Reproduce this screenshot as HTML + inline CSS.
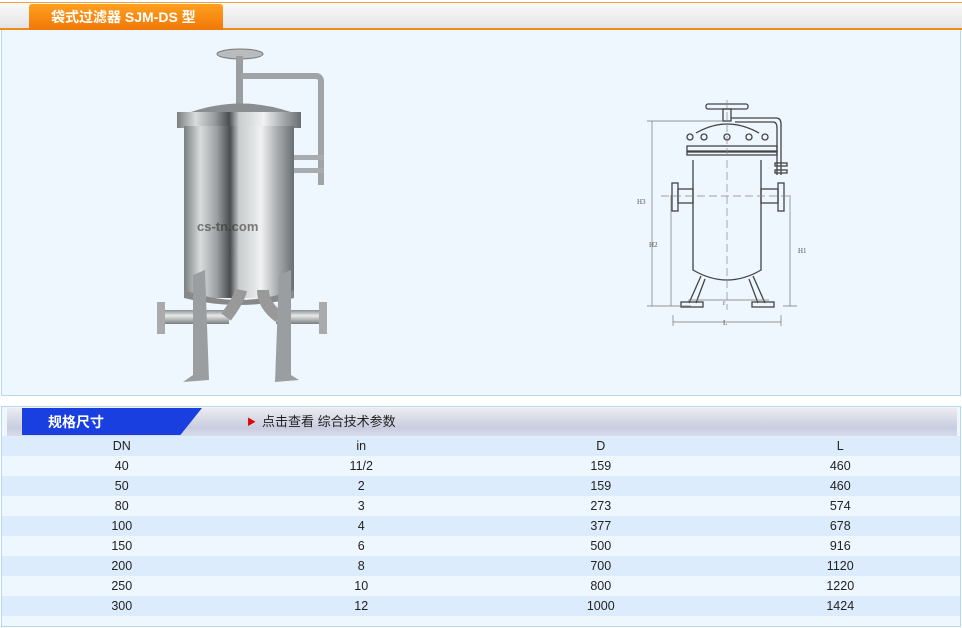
<!DOCTYPE html>
<html><head><meta charset="utf-8"><style>
*{margin:0;padding:0;box-sizing:border-box}
body{width:962px;height:628px;background:#fff;font-family:"Liberation Sans","Noto Sans CJK SC",sans-serif;position:relative;overflow:hidden}
.top{position:absolute;left:0;top:2px;width:962px;height:28px;background:linear-gradient(#fafafa,#e4e4e4);border-top:1px solid #f5a040;border-bottom:2px solid #f08a10}
.tab{position:absolute;left:29px;top:4px;width:194px;height:26px;background:linear-gradient(#ffa020,#f07808);border-radius:3px 3px 0 0;color:#fff;font-weight:bold;font-size:14px;line-height:26px;padding-left:22px}
.box1{position:absolute;left:1px;top:30px;width:960px;height:366px;background:#eef6fe;border:1px solid #b8d6f0;border-top:none}
.box2{position:absolute;left:1px;top:406px;width:960px;height:221px;background:#eef6fe;border:1px solid #b8d6f0;overflow:hidden}
.hdr{position:absolute;left:5px;top:1px;width:950px;height:28px;background:linear-gradient(#ececf0,#c8cde0 70%,#d8dbe8)}
.btab{position:absolute;left:20px;top:1px;width:180px;height:27px;background:#1a3fe0;clip-path:polygon(0 0,100% 0,88% 100%,0 100%);color:#fff;font-weight:bold;font-size:14px;line-height:28px;padding-left:26px}
.link{position:absolute;left:245px;top:1px;line-height:28px;font-size:13px;color:#222}
.link b{color:#e00000;font-size:9px;margin-right:6px;vertical-align:1px}
table{position:absolute;left:0;top:29px;width:958px;border-collapse:collapse;font-size:12.5px;color:#222}
td{height:20px;text-align:center;width:25%;padding:0}
tr:nth-child(odd){background:#dcecfc}
tr:nth-child(even){background:#eef6fe}
</style></head><body>
<div class="top"></div>
<div class="tab">袋式过滤器 SJM-DS 型</div>
<div class="box1">
<svg width="960" height="366" style="position:absolute;left:0;top:0">
<defs>
<linearGradient id="m" x1="0" x2="1"><stop offset="0" stop-color="#7a7e80"/><stop offset=".15" stop-color="#d8dcdc"/><stop offset=".3" stop-color="#9a9ea0"/><stop offset=".42" stop-color="#4a4e50"/><stop offset=".5" stop-color="#c8cccc"/><stop offset=".7" stop-color="#f0f2f2"/><stop offset=".85" stop-color="#a8acae"/><stop offset="1" stop-color="#6a6e70"/></linearGradient>
<linearGradient id="p" x1="0" y1="0" x2="0" y2="1"><stop offset="0" stop-color="#8a8e90"/><stop offset=".4" stop-color="#e8eaea"/><stop offset="1" stop-color="#7a7e80"/></linearGradient>
</defs>
<g transform="translate(-1,-30)">
<ellipse cx="239" cy="54" rx="23" ry="5" fill="#b8bcbe" stroke="#777"/>
<rect x="235" y="56" width="7" height="50" fill="#9a9ea0"/>
<path d="M240 76 H315 Q320 76 320 82 V185" fill="none" stroke="#a0a4a6" stroke-width="6"/>
<rect x="293" y="155" width="30" height="5" fill="#a8acae"/><rect x="293" y="168" width="30" height="5" fill="#a8acae"/>
<path d="M190 112 Q240 95 290 112 Z" fill="#8a8e90"/>
<rect x="176" y="112" width="124" height="16" fill="url(#m)"/>
<rect x="183" y="126" width="110" height="172" fill="url(#m)"/>
<path d="M183 290 Q238 310 293 290 V298 Q238 312 183 298Z" fill="#888"/>
<text x="196" y="231" font-size="13" font-weight="bold" fill="#333" opacity=".6">cs-tn.com</text>
<rect x="158" y="310" width="70" height="14" fill="url(#p)"/><rect x="156" y="302" width="8" height="32" fill="#aaa"/>
<rect x="275" y="310" width="48" height="14" fill="url(#p)"/><rect x="318" y="302" width="8" height="32" fill="#aaa"/>
<path d="M225 317 Q238 300 240 290" stroke="#999" stroke-width="12" fill="none"/>
<path d="M278 317 Q262 305 262 290" stroke="#999" stroke-width="12" fill="none"/>
<path d="M192 275 L204 270 L208 380 L182 382 L192 375Z" fill="#9a9ea0"/>
<path d="M278 275 L290 270 L290 375 L298 380 L274 382Z" fill="#9a9ea0"/>
</g>
<g transform="translate(-1,-30)" fill="none" stroke="#444" stroke-width="1.3">
<rect x="705" y="104" width="42" height="5" rx="2"/><rect x="722" y="109" width="8" height="12"/>
<path d="M730 118 H775 Q780 118 780 124 V175 M734 122 H772 Q776 122 776 128 V175"/>
<path d="M695 133 Q726 115 758 133"/>
<rect x="686" y="146" width="90" height="5"/><rect x="686" y="152" width="90" height="3"/>
<circle cx="689" cy="137" r="3"/><circle cx="703" cy="137" r="3"/><circle cx="726" cy="137" r="3"/><circle cx="748" cy="137" r="3"/><circle cx="764" cy="137" r="3"/>
<path d="M692 160 V270 Q726 290 760 270 V160"/>
<rect x="774" y="163" width="12" height="3"/><rect x="774" y="170" width="12" height="3"/>
<rect x="671" y="183" width="6" height="28"/><rect x="677" y="189" width="15" height="14"/>
<rect x="777" y="183" width="6" height="28"/><rect x="760" y="189" width="17" height="14"/>
<path d="M700 276 L688 303 M704 279 L695 303 M752 276 L764 303 M748 279 L757 303"/>
<rect x="680" y="302" width="22" height="5"/><rect x="751" y="302" width="22" height="5"/>
<path d="M646 121 H722 M651 121 V306 M670 195 V306 M646 306 H690 M789 195 V306 M782 306 H796 M672 315 V326 M780 315 V326 M672 322 H780 M687 300 H768" stroke="#777" stroke-width=".7"/>
<path d="M726 100 V310 M660 196 H790" stroke="#888" stroke-width=".7" stroke-dasharray="8 4"/>
<g stroke="none" fill="#555" font-size="7" font-family="Liberation Serif"><text x="636" y="204">H3</text><text x="648" y="247">H2</text><text x="797" y="253">H1</text><text x="722" y="305">r</text><text x="722" y="325">L</text></g>
</g>
</svg>
</div>
<div class="box2">
<div class="hdr"></div>
<div class="btab">规格尺寸</div>
<div class="link"><b>▶</b>点击查看 综合技术参数</div>
<table>
<tr><td>DN</td><td>in</td><td>D</td><td>L</td></tr>
<tr><td>40</td><td>11/2</td><td>159</td><td>460</td></tr>
<tr><td>50</td><td>2</td><td>159</td><td>460</td></tr>
<tr><td>80</td><td>3</td><td>273</td><td>574</td></tr>
<tr><td>100</td><td>4</td><td>377</td><td>678</td></tr>
<tr><td>150</td><td>6</td><td>500</td><td>916</td></tr>
<tr><td>200</td><td>8</td><td>700</td><td>1120</td></tr>
<tr><td>250</td><td>10</td><td>800</td><td>1220</td></tr>
<tr><td>300</td><td>12</td><td>1000</td><td>1424</td></tr>
</table>
</div>
</body></html>
